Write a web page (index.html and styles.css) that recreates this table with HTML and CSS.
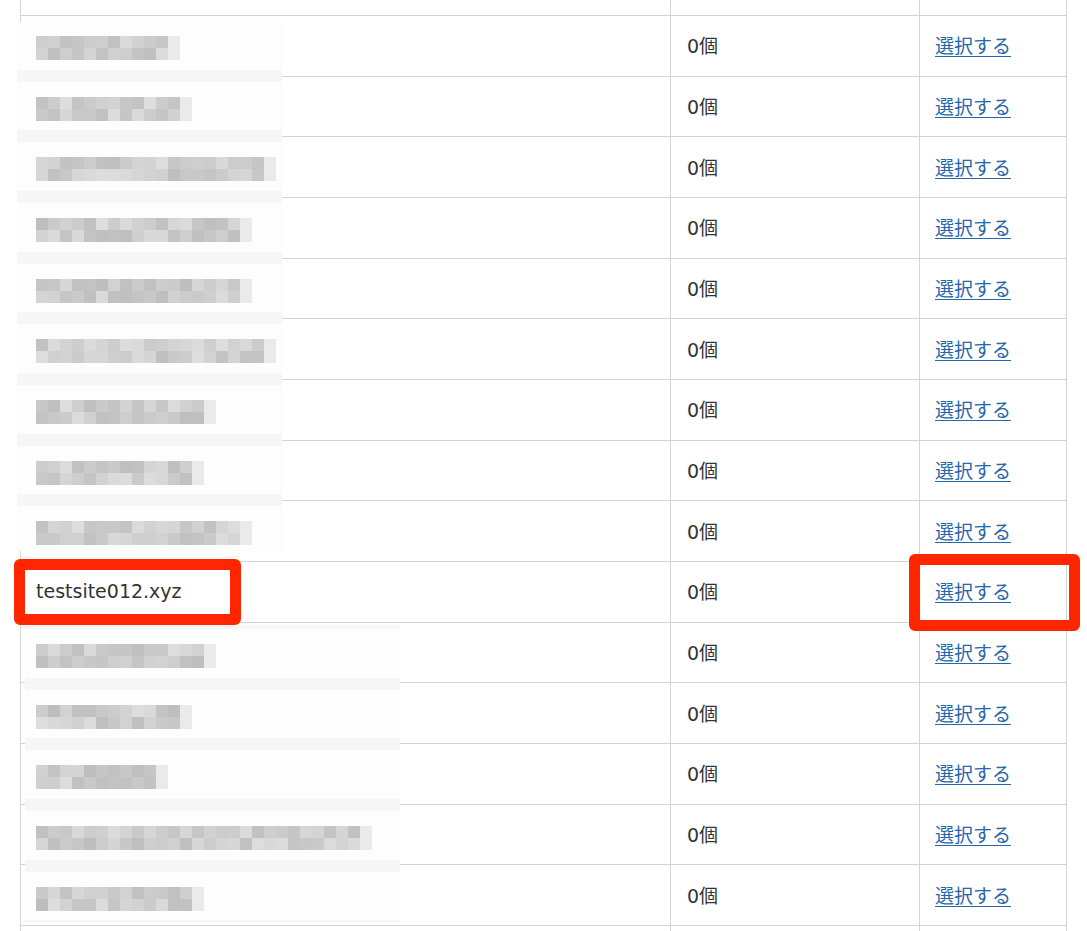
FILE: index.html
```html
<!DOCTYPE html>
<html lang="ja">
<head>
    <meta charset="UTF-8">
    <meta name="viewport" content="width=device-width, initial-scale=1.0">
    <title>サイト選択</title>
    <link rel="stylesheet" href="styles.css">
</head>
<body>
    <div class="page">
        <div class="sheet">
            <div class="row"><div class="cell"></div><div class="cell"></div><div class="cell"></div></div>
            <div class="row"><div class="cell"></div><div class="cell">0個</div><div class="cell"><a href="#">選択する</a></div></div>
            <div class="row"><div class="cell"></div><div class="cell">0個</div><div class="cell"><a href="#">選択する</a></div></div>
            <div class="row"><div class="cell"></div><div class="cell">0個</div><div class="cell"><a href="#">選択する</a></div></div>
            <div class="row"><div class="cell"></div><div class="cell">0個</div><div class="cell"><a href="#">選択する</a></div></div>
            <div class="row"><div class="cell"></div><div class="cell">0個</div><div class="cell"><a href="#">選択する</a></div></div>
            <div class="row"><div class="cell"></div><div class="cell">0個</div><div class="cell"><a href="#">選択する</a></div></div>
            <div class="row"><div class="cell"></div><div class="cell">0個</div><div class="cell"><a href="#">選択する</a></div></div>
            <div class="row"><div class="cell"></div><div class="cell">0個</div><div class="cell"><a href="#">選択する</a></div></div>
            <div class="row"><div class="cell"></div><div class="cell">0個</div><div class="cell"><a href="#">選択する</a></div></div>
            <div class="row"><div class="cell">testsite012.xyz</div><div class="cell">0個</div><div class="cell"><a href="#">選択する</a></div></div>
            <div class="row"><div class="cell"></div><div class="cell">0個</div><div class="cell"><a href="#">選択する</a></div></div>
            <div class="row"><div class="cell"></div><div class="cell">0個</div><div class="cell"><a href="#">選択する</a></div></div>
            <div class="row"><div class="cell"></div><div class="cell">0個</div><div class="cell"><a href="#">選択する</a></div></div>
            <div class="row"><div class="cell"></div><div class="cell">0個</div><div class="cell"><a href="#">選択する</a></div></div>
            <div class="row"><div class="cell"></div><div class="cell">0個</div><div class="cell"><a href="#">選択する</a></div></div>
            <div class="row"><div class="cell"></div><div class="cell"></div><div class="cell"></div></div>
        </div>

        <!-- blurred site names -->
        <div class="redact redact-a">
            <div class="strips">
                <div class="strip"><div class="mosaic" data-blocks="12"></div></div>
                <div class="strip"><div class="mosaic" data-blocks="13"></div></div>
                <div class="strip"><div class="mosaic" data-blocks="20"></div></div>
                <div class="strip"><div class="mosaic" data-blocks="18"></div></div>
                <div class="strip"><div class="mosaic" data-blocks="18"></div></div>
                <div class="strip"><div class="mosaic" data-blocks="20"></div></div>
                <div class="strip"><div class="mosaic" data-blocks="15"></div></div>
                <div class="strip"><div class="mosaic" data-blocks="14"></div></div>
                <div class="strip"><div class="mosaic" data-blocks="18"></div></div>
            </div>
        </div>
        <div class="redact redact-b">
            <div class="strips">
                <div class="strip"><div class="mosaic" data-blocks="15"></div></div>
                <div class="strip"><div class="mosaic" data-blocks="13"></div></div>
                <div class="strip"><div class="mosaic" data-blocks="11"></div></div>
                <div class="strip"><div class="mosaic" data-blocks="28"></div></div>
                <div class="strip"><div class="mosaic" data-blocks="14"></div></div>
            </div>
        </div>

        <div class="mark mark-name"></div>
        <div class="mark mark-action"></div>
    </div>
    <script src="script.js"></script>
</body>
</html>
```

FILE: styles.css
```css
body {
    margin: 0;
    background: #fff;
    color: #333;
    font-family: 'DejaVu Sans', 'Noto Sans CJK JP', sans-serif;
    font-size: 19px;
}
.page {
    position: relative;
    height: 931px;
    overflow: hidden;
}
.sheet {
    margin-top: -44.67px;
    margin-left: 20px;
    width: 1047px;
    border-left: 1px solid #d4d4d4;
    box-sizing: border-box;
}
.row {
    display: grid;
    grid-template-columns: 650px 249px 147px;
    height: 60.667px;
}
.cell {
    display: flex;
    align-items: center;
    box-sizing: border-box;
    padding-left: 15px;
    padding-bottom: 2px;
    border-right: 1px solid #d4d4d4;
    border-bottom: 1px solid #d4d4d4;
    white-space: nowrap;
}
.cell:nth-child(2) {
    padding-left: 16px;
}
.cell a {
    color: #2766ab;
    text-decoration: underline;
    text-underline-offset: 3px;
}

.redact {
    position: absolute;
    overflow: hidden;
    background: #fdfdfd;
}
.redact-a {
    left: 17px;
    top: 22px;
    width: 265px;
    height: 529px;
}
.redact-a .strips {
    margin-top: -7px;
}
.redact-a .mosaic {
    margin-left: 19px;
}
.redact-b {
    left: 25px;
    top: 625px;
    width: 375px;
    height: 297px;
}
.redact-b .strips {
    margin-top: -2px;
}
.redact-b .mosaic {
    margin-left: 11px;
}
.strip {
    height: 60.667px;
    box-sizing: border-box;
    padding-top: 21px;
    background: linear-gradient(#f6f6f6 0 6px, transparent 6px calc(100% - 6px), #f6f6f6 calc(100% - 6px));
}
.mosaic-row {
    display: flex;
    height: 12px;
}
.mosaic-row span {
    width: 12px;
    height: 12px;
    flex: none;
}

.mark {
    position: absolute;
    border: 11px solid #ff2600;
    border-radius: 6px;
    box-sizing: border-box;
}
.mark-name {
    left: 14px;
    top: 559px;
    width: 227px;
    height: 66px;
}
.mark-action {
    left: 909px;
    top: 554px;
    width: 171px;
    height: 77px;
}
```

FILE: script.js
```js
// build the pixelated blocks that hide the other site names
var seed = 7;
function rnd() {
    seed = (seed * 9301 + 49297) % 233280;
    return seed / 233280;
}

document.querySelectorAll('.mosaic').forEach(function (el) {
    var count = parseInt(el.dataset.blocks, 10);
    for (var r = 0; r < 2; r++) {
        var line = document.createElement('div');
        line.className = 'mosaic-row';
        for (var i = 0; i < count; i++) {
            var g = Math.round(190 + rnd() * 32);
            if (i === count - 1) g = 234;
            var px = document.createElement('span');
            px.style.background = 'rgb(' + g + ',' + g + ',' + g + ')';
            line.appendChild(px);
        }
        el.appendChild(line);
    }
});
```
